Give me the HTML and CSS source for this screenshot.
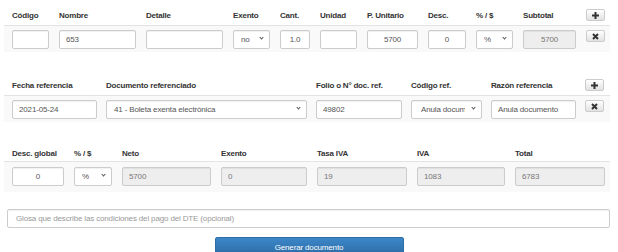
FILE: index.html
```html
<!DOCTYPE html>
<html lang="es">
<head>
  <meta charset="UTF-8">
  <title>Emitir documento</title>
  <link rel="stylesheet" href="styles.css">
</head>
<body>
  <div class="page">
    <!-- Detalle -->
    <div class="block block-detalle">
      <div class="head cols-detalle">
        <span>Código</span>
        <span>Nombre</span>
        <span>Detalle</span>
        <span>Exento</span>
        <span>Cant.</span>
        <span>Unidad</span>
        <span>P. Unitario</span>
        <span>Desc.</span>
        <span>% / $</span>
        <span>Subtotal</span>
        <button class="icon-btn" type="button"><svg width="7" height="7" viewBox="0 0 7 7"><rect x="2.5" y="0" width="2" height="7" fill="#333"/><rect x="0" y="2.5" width="7" height="2" fill="#333"/></svg></button>
      </div>
      <div class="body cols-detalle">
        <input type="text" value="">
        <input type="text" value="653">
        <input type="text" value="">
        <span class="sel"><select><option>no</option></select></span>
        <input type="text" class="center" value="1.0">
        <input type="text" value="">
        <input type="text" class="center" value="5700">
        <input type="text" class="center" value="0">
        <span class="sel"><select><option>%</option></select></span>
        <input type="text" class="center" value="5700" disabled>
        <button class="icon-btn" type="button"><svg width="7" height="7" viewBox="0 0 7 7"><path d="M1 1 L6 6 M6 1 L1 6" stroke="#333" stroke-width="2"/></svg></button>
      </div>
    </div>

    <!-- Referencias -->
    <div class="block block-ref">
      <div class="head cols-ref">
        <span>Fecha referencia</span>
        <span>Documento referenciado</span>
        <span>Folio o N° doc. ref.</span>
        <span>Código ref.</span>
        <span>Razón referencia</span>
        <button class="icon-btn" type="button"><svg width="7" height="7" viewBox="0 0 7 7"><rect x="2.5" y="0" width="2" height="7" fill="#333"/><rect x="0" y="2.5" width="7" height="2" fill="#333"/></svg></button>
      </div>
      <div class="body cols-ref">
        <input type="text" value="2021-05-24">
        <span class="sel"><select><option>41 - Boleta exenta electrónica</option></select></span>
        <input type="text" value="49802">
        <span class="sel"><select class="right"><option>Anula documento</option></select></span>
        <input type="text" value="Anula documento">
        <button class="icon-btn" type="button"><svg width="7" height="7" viewBox="0 0 7 7"><path d="M1 1 L6 6 M6 1 L1 6" stroke="#333" stroke-width="2"/></svg></button>
      </div>
    </div>

    <!-- Totales -->
    <div class="block block-tot">
      <div class="head cols-tot">
        <span>Desc. global</span>
        <span>% / $</span>
        <span>Neto</span>
        <span>Exento</span>
        <span>Tasa IVA</span>
        <span>IVA</span>
        <span>Total</span>
      </div>
      <div class="body cols-tot">
        <input type="text" class="center" value="0">
        <span class="sel"><select><option>%</option></select></span>
        <input type="text" value="5700" disabled>
        <input type="text" value="0" disabled>
        <input type="text" value="19" disabled>
        <input type="text" value="1083" disabled>
        <input type="text" value="6783" disabled>
      </div>
    </div>

    <input type="text" class="glosa" placeholder="Glosa que describe las condiciones del pago del DTE (opcional)">
    <div class="actions">
      <button type="button" class="btn-primary">Generar documento</button>
    </div>
  </div>
</body>
</html>
```

FILE: styles.css
```css
html, body {
  margin: 0;
  padding: 0;
  background: #ffffff;
  font-family: 'Liberation Sans', Arial, sans-serif;
  color: #333;
}
*, *::before, *::after {
  box-sizing: border-box;
}
.page {
  width: 618px;
  padding: 0 8px 0 4px;
}
/* tablas de detalle / referencias / totales */
.head, .body {
  display: grid;
  column-gap: 10px;
  padding-left: 8px;
  padding-right: 4px;
}
.head {
  padding-top: 9px;
  padding-bottom: 4px;
  align-items: center;
  grid-auto-rows: 12px;
  font-size: 8px;
  font-weight: bold;
  letter-spacing: -0.2px;
}
.head span {
  white-space: nowrap;
}
.body {
  background: #f9f9f9;
  border-top: 1px solid #e3e3e3;
  padding-top: 4px;
  padding-bottom: 3px;
  align-items: start;
}
.cols-detalle {
  grid-template-columns: 37px 77px 77px 37px 30px 37px 51px 38px 37px 53px 19px;
}
.cols-ref {
  column-gap: 9px;
  grid-template-columns: 85px 201px 86px 71px 85px 19px;
}
.cols-tot {
  grid-template-columns: 52px 38px 89px 86px 90px 88px 90px;
}
.block-ref {
  margin-top: 18px;
}
.block-tot {
  margin-top: 16px;
}
.block-tot .head {
  padding-bottom: 2px;
}
.block-tot .body {
  padding-top: 5px;
  padding-bottom: 6px;
}
input, select {
  width: 100%;
  height: 19px;
  margin: 0;
  border: 1px solid #ccc;
  border-radius: 2px;
  background: #fff;
  font-family: 'Liberation Sans', Arial, sans-serif;
  font-size: 8px;
  letter-spacing: -0.15px;
  color: #555;
  box-shadow: inset 0 1px 1px rgba(0, 0, 0, 0.06);
}
input {
  padding: 0 6px;
}
select {
  display: block;
  appearance: none;
  -webkit-appearance: none;
  padding: 0 14px 0 7px;
  white-space: nowrap;
  overflow: hidden;
}
select.right {
  padding-left: 9px;
  padding-right: 16px;
}
/* flecha del select */
.sel {
  position: relative;
  display: block;
}
.sel::after {
  content: "";
  position: absolute;
  right: 7px;
  top: 6px;
  width: 3px;
  height: 3px;
  border-right: 1.3px solid #555;
  border-bottom: 1.3px solid #555;
  transform: rotate(45deg);
  pointer-events: none;
}
input.center {
  text-align: center;
}
input:disabled {
  background: #eeeeee;
  color: #777;
}
.icon-btn {
  width: 19px;
  height: 12px;
  padding: 0;
  border: 1px solid #ccc;
  border-radius: 2px;
  background: linear-gradient(#ffffff, #e2e2e2);
  display: flex;
  align-items: center;
  justify-content: center;
}
.icon-btn svg {
  display: block;
}
/* glosa y boton */
.glosa {
  display: block;
  width: 603px;
  height: 19px;
  margin: 17px 0 0 3px;
  padding: 0 8px;
}
.glosa::placeholder {
  color: #999;
}
.actions {
  display: flex;
  justify-content: center;
  padding: 9px 0 0 4px;
}
.btn-primary {
  width: 189px;
  height: 20px;
  border: 1px solid #2e6da4;
  border-radius: 2px;
  background: linear-gradient(#3c87c9, #2b6aa3);
  color: #fff;
  font-family: 'Liberation Sans', Arial, sans-serif;
  font-size: 8px;
  letter-spacing: -0.15px;
  padding: 0;
}
```
